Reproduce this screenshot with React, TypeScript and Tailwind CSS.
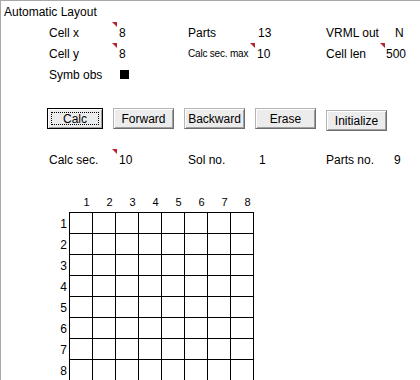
import React from 'react';

function Tri() {
  return (
    <svg className="absolute top-0 left-0" width="6" height="6" viewBox="0 0 6 6">
      <polygon points="0,0 5,0 5,5" fill="#b8232f" />
      <polygon points="0,0.6 4.4,5 5,5.6" fill="#f2c4c8" />
    </svg>
  );
}

type FieldProps = {
  label: string;
  value?: string;
  mark?: boolean;
  small?: boolean;
  labelW: string;
  children?: React.ReactNode;
};

function Field({ label, value, mark, small, labelW, children }: FieldProps) {
  return (
    <div className="flex items-center h-full">
      <div className={`${labelW} ${small ? 'text-[10px] tracking-[-0.2px]' : ''} whitespace-nowrap`}>{label}</div>
      <div className="relative w-[7px] h-full">{mark && <Tri />}</div>
      <div className="whitespace-nowrap">{children ?? value}</div>
    </div>
  );
}

function Row({ children }: { children: React.ReactNode }) {
  return (
    <div className="grid grid-cols-[139px_138px_80px] h-[21px] pl-[48px]">{children}</div>
  );
}

function Btn({ label, focus, className = '' }: { label: string; focus?: boolean; className?: string }) {
  return (
    <div
      className={`h-[21px] flex items-center justify-center bg-[#ececec] border ${
        focus
          ? 'border-black'
          : 'border-[#b4b4b4] border-r-[#6d6d6d] border-b-[#6d6d6d]'
      } shadow-[inset_1px_1px_0_#ffffff,inset_-1px_-1px_0_#a0a0a0] ${className}`}
    >
      {focus ? (
        <div className="w-[calc(100%-6px)] h-[calc(100%-6px)] border border-dotted border-black flex items-center justify-center">
          {label}
        </div>
      ) : (
        label
      )}
    </div>
  );
}

export default function App() {
  const cols = [1, 2, 3, 4, 5, 6, 7, 8];
  return (
    <div
      className="relative w-[420px] h-[380px] bg-white border-l border-t border-[#a8a8a8] overflow-hidden text-[12px] text-black"
      style={{ fontFamily: '"Liberation Sans", Arial, sans-serif' }}
    >
      <div className="absolute left-[-1px] top-[252px] w-[1px] h-[24px] bg-[#5a8f6a]" />
      <div className="mt-[1px] h-[20px] leading-[20px] pl-[3px]">Automatic Layout</div>

      <Row>
        <Field label="Cell x" value="8" mark labelW="w-[63px]" />
        <Field label="Parts" value="13" labelW="w-[63px]" />
        <Field label="VRML out" value="N" labelW="w-[62px]" />
      </Row>
      <Row>
        <Field label="Cell y" value="8" mark labelW="w-[63px]" />
        <Field label="Calc sec. max" value="10" mark small labelW="w-[62px]" />
        <Field label="Cell len" value="500" mark labelW="w-[61px]" />
      </Row>
      <Row>
        <Field label="Symb obs" labelW="w-[63px]">
          <div className="w-[9px] h-[9px] bg-black ml-[1px]" />
        </Field>
      </Row>

      <div className="flex items-start gap-[10px] pl-[46px] mt-[23px]">
        <Btn label="Calc" focus className="w-[56px]" />
        <Btn label="Forward" className="w-[61px]" />
        <Btn label="Backward" className="w-[61px]" />
        <Btn label="Erase" className="w-[61px]" />
        <Btn label="Initialize" className="w-[61px] mt-[2px]" />
      </div>

      <div className="mt-[18px]">
        <Row>
          <Field label="Calc sec." value="10" mark labelW="w-[63px]" />
          <Field label="Sol no." value="1" labelW="w-[64px]" />
          <Field label="Parts no." value="9" labelW="w-[61px]" />
        </Row>
      </div>

      <div className="mt-[22px] pl-[51px]">
        <div className="flex h-[20px] items-center">
          <div className="w-[18px]" />
          {cols.map((c) => (
            <div key={c} className="w-[23px] text-center pl-[10px] text-[11px]">
              {c}
            </div>
          ))}
        </div>
        <div className="flex">
          <div className="w-[17px] flex flex-col pt-[1px]">
            {cols.map((r) => (
              <div key={r} className="h-[21px] flex items-center justify-end pr-[2px]">
                {r}
              </div>
            ))}
          </div>
          <div className="grid grid-cols-[repeat(8,23px)] border-l border-t border-black">
            {Array.from({ length: 64 }).map((_, i) => (
              <div key={i} className="h-[21px] border-r border-b border-black" />
            ))}
          </div>
        </div>
      </div>
    </div>
  );
}
